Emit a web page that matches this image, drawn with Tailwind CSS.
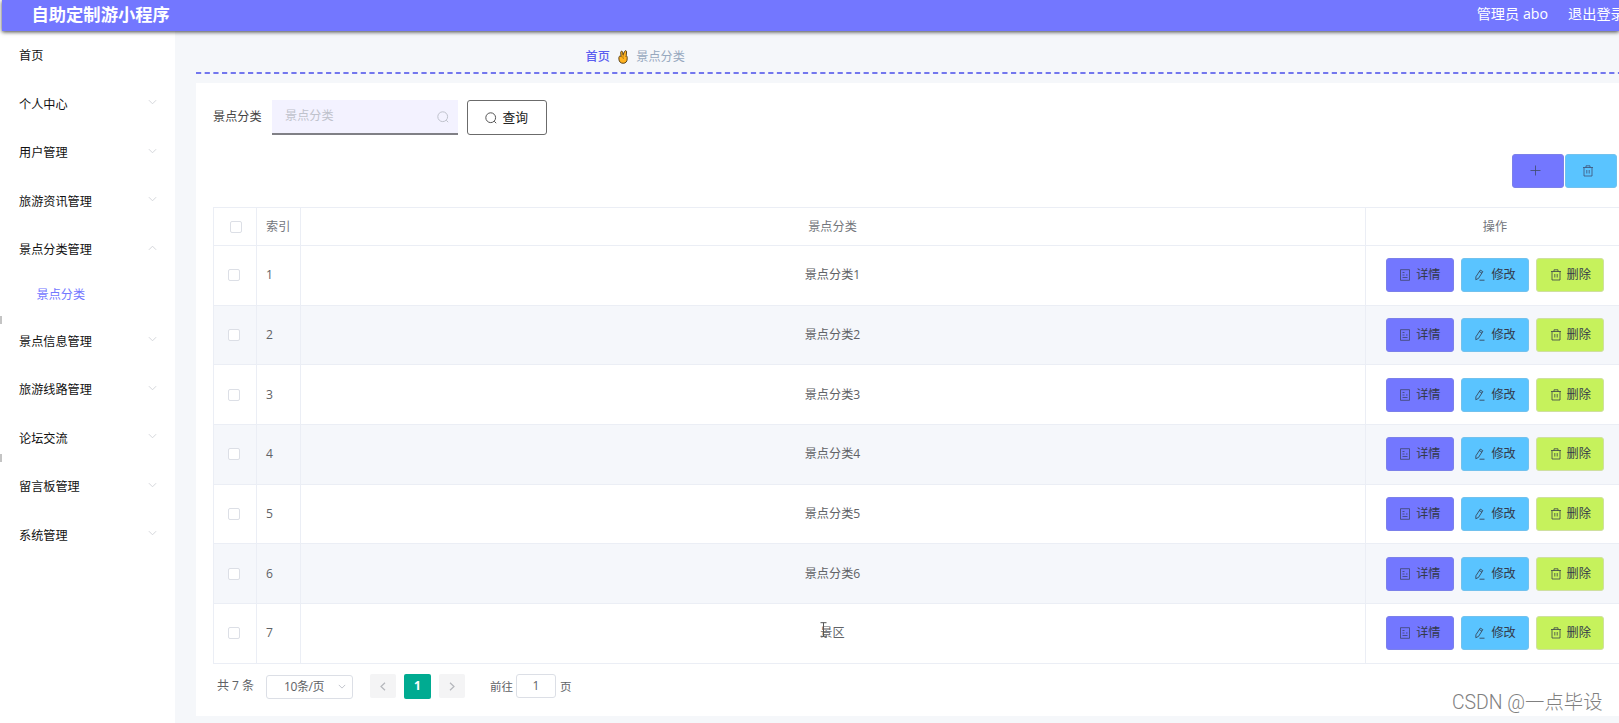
<!DOCTYPE html>
<html lang="zh">
<head>
<meta charset="utf-8">
<title>自助定制游小程序</title>
<script src="https://cdn.jsdelivr.net/npm/@tailwindcss/browser@4"></script>
</head>
<body class="w-[1619px] h-[723px] overflow-hidden relative bg-white pl-[2px] text-[12.150px] text-[#606266] font-['Open_Sans','Noto_Sans_CJK_SC',sans-serif]">
<svg class="hidden">
  <symbol id="down" viewBox="0 0 10 6"><path d="M1 1l4 4 4-4" fill="none" stroke="currentColor"/></symbol>
  <symbol id="up" viewBox="0 0 10 6"><path d="M1 5l4-4 4 4" fill="none" stroke="currentColor"/></symbol>
  <symbol id="search" viewBox="0 0 12 12"><circle cx="5.7" cy="5.7" r="4.9" fill="none" stroke="currentColor"/><path d="M9.2 9.2l2 2" stroke="currentColor"/></symbol>
  <symbol id="trash" viewBox="0 0 12 12"><path d="M1 2.500h10M4 2.500V.8h4v1.700M2 2.500v8.500h8v-8.500M4.800 5v3.500M7.200 5v3.500" fill="none" stroke="currentColor" stroke-width=".75"/></symbol>
  <symbol id="doc" viewBox="0 0 12 12"><path d="M1.500.7h9v10.600h-9zM3.500 3.500h2M3.500 6h2M3.500 8.500h5M7 6h1.500" fill="none" stroke="currentColor" stroke-width=".65"/></symbol>
  <symbol id="edit" viewBox="0 0 12 12"><path d="M6.300 1.100l2.500 1.500-4.300 6.800-2.700 1.300.1-2.900zM5.400 2.600l2.500 1.500M5.500 11.200h5" fill="none" stroke="currentColor" stroke-width=".8"/></symbol>
</svg>

<header class="relative z-10 h-[31px] bg-[#7377ff] text-white flex items-center shadow-[0_1px_4px_rgba(0,0,0,0.75)] whitespace-nowrap">
  <h1 class="ml-[29.500px] -mt-[2px] text-[17.300px] font-bold leading-none">自助定制游小程序</h1>
  <span class="ml-auto -mt-[3px] text-[14.200px] leading-none">管理员 abo</span>
  <span class="ml-[20px] -mt-[3px] w-[51px] text-[14.200px] leading-none">退出登录</span>
</header>

<div class="flex h-[692px]">
  <nav id="nav" class="w-[173px] shrink-0 bg-white text-[#111] leading-none pt-px"></nav>

  <main class="grow bg-[#f5f7fa] pl-[21px] overflow-hidden">
    <div class="h-[41px] flex items-center pl-[389.500px] pt-[11px] leading-none">
      <span class="text-[#5b5ef0] font-medium">首页</span>
      <svg class="w-[10px] h-[14px] ml-[8px]" viewBox="0 0 10 14"><path d="M.9 7.500C.8 6.200 2 5.900 3 6.400L2.700 2.300C2.700.9 4.400.8 4.600 2.100l.5 2.700L6.500 1.500C7 .3 8.600.5 8.600 1.800L8.200 5.600C9.200 6.200 9.300 7 9.200 8.800c0 2.800-1.500 4.500-4 4.500S1.100 11.800.9 9.200z" fill="#ffb321" stroke="#4a3412" stroke-width=".9"/><path d="M3 6.700c1.700-.3 2.700.8 2.300 2.300M5.100 4.800l.3 1.700M8.100 5.700L7.400 7" fill="none" stroke="#8a5a08" stroke-width=".6"/></svg>
      <span class="ml-[8.500px] text-[#97a8be]">景点分类</span>
    </div>
    <svg class="block w-[1423px] h-[2px]"><path d="M0 1h1423" stroke="#7377ee" stroke-width="2" stroke-dasharray="5.200 3.470"/></svg>

    <section class="mt-[9px] h-[633px] bg-white pl-[17px] pt-[17px]">
      <div class="flex items-center h-[35px] leading-none">
        <label class="w-[59px] text-[#444]">景点分类</label>
        <div class="w-[186px] h-[35px] bg-[#f3f2ff] border-b-2 border-[#808086] flex items-center justify-between pl-[13px] pr-[9px] text-[#bfc2cc]"><span>景点分类</span><svg class="w-[12px] h-[12px]"><use href="#search"/></svg></div>
        <button class="ml-[9px] w-[79.500px] h-[35px] border border-[#6b6b6b] rounded-[3px] flex items-center justify-center gap-[5px] text-[12.800px] text-[#222]"><svg class="w-[12px] h-[12px] text-[#555]"><use href="#search"/></svg>查询</button>
      </div>
      <div class="mt-[19px] flex justify-end gap-[1px] pr-[2.500px] text-[#3f4a6b]">
        <button class="w-[52px] h-[33.500px] rounded-[3px] bg-[#7377ff] border border-[#7b80ea] flex items-center justify-center"><svg class="w-[11px] h-[11px] -ml-[5px]" viewBox="0 0 11 11"><path d="M5.500.5v10M.5 5.500h10" stroke="currentColor" stroke-width=".8"/></svg></button>
        <button class="w-[52px] h-[33.500px] rounded-[3px] bg-[#5ac4ff] border border-[#72c2ee] flex items-center justify-center"><svg class="w-[12px] h-[12px] -ml-[5px]"><use href="#trash"/></svg></button>
      </div>
      <div class="mt-[19.500px] border-t border-l border-[#ebeef5]" id="table">
        <div class="flex h-[38px] border-b border-[#ebeef5] text-[#73767c]">
          <div class="w-[43px] shrink-0 border-r border-[#ebeef5] flex items-center pl-[16px]"><i class="block w-[12px] h-[12px] border border-[#dcdfe6] rounded-[2px] bg-white"></i></div>
          <div class="w-[43.500px] shrink-0 border-r border-[#ebeef5] flex items-center pl-[9px] pt-px">索引</div>
          <div class="w-[1065px] shrink-0 border-r border-[#ebeef5] flex items-center justify-center pt-px">景点分类</div>
          <div class="w-[259px] shrink-0 flex items-center justify-center pt-px">操作</div>
        </div>
      </div>
      <div class="mt-[10px] flex items-center h-[25px] text-[12px] leading-none whitespace-nowrap">
        <span class="ml-[4px] w-[49px]">共 7 条</span>
        <div class="w-[87px] h-[24px] border border-[#dcdfe6] rounded-[3px] flex items-center justify-between pl-[17px] pr-[6px] mt-[1px]"><span class="tracking-[-0.400px]">10条/页</span><svg class="w-[8px] h-[5px] text-[#b4b8c0]"><use href="#down"/></svg></div>
        <div class="ml-[17px] w-[26px] h-[24px] bg-[#f4f4f5] rounded-[2px] flex items-center justify-center text-[#b4b6bb]"><svg class="w-[6px] h-[9px]" viewBox="0 0 6 9"><path d="M5 .7L1 4.500l4 3.800" fill="none" stroke="currentColor" stroke-width="1.200"/></svg></div>
        <div class="ml-[8px] w-[27px] h-[25px] bg-[#00ab91] rounded-[2px] flex items-center justify-center text-white font-bold">1</div>
        <div class="ml-[8px] w-[26px] h-[24px] bg-[#f4f4f5] rounded-[2px] flex items-center justify-center text-[#b4b6bb]"><svg class="w-[6px] h-[9px]" viewBox="0 0 6 9"><path d="M1 .7l4 3.800-4 3.800" fill="none" stroke="currentColor" stroke-width="1.200"/></svg></div>
        <span class="ml-[25px] w-[26px] text-[11.500px]">前往</span>
        <div class="w-[40px] h-[24px] border border-[#dcdfe6] rounded-[3px] flex items-center justify-center">1</div>
        <span class="ml-[4px] text-[11.500px]">页</span>
      </div>
    </section>
  </main>
</div>

<i class="absolute left-0 top-[316px] w-[2px] h-[8px] bg-[#c4c4c4]"></i>
<i class="absolute left-0 top-[454px] w-[2px] h-[8px] bg-[#c4c4c4]"></i>
<svg class="absolute left-[820px] top-[622px] w-[7px] h-[15px]" viewBox="0 0 7 15"><path d="M.5.7h6M3.500.7v13.600M.5 14.300h6" stroke="#555" fill="none"/></svg>
<div class="absolute left-[1452px] top-[692px] text-[19.400px] leading-[22px] font-['Roboto','Noto_Sans_CJK_SC',sans-serif] font-light text-[#808080] whitespace-nowrap">CSDN @一点毕设</div>

<script>
  const items = [['首页', ''], ['个人中心', 'down'], ['用户管理', 'down'], ['旅游资讯管理', 'down'], ['景点分类管理', 'up'], null, ['景点信息管理', 'down'], ['旅游线路管理', 'down'], ['论坛交流', 'down'], ['留言板管理', 'down'], ['系统管理', 'down']];
  document.getElementById('nav').innerHTML = items.map(it => it
    ? `<div class="h-[48.500px] flex items-center justify-between pl-[17px] pr-[18px]"><span>${it[0]}</span>${it[1] ? `<svg class="w-[9px] h-[6px] mb-[5px] text-[#cfd1d6]"><use href="#${it[1]}"/></svg>` : ''}</div>`
    : '<div class="h-[43px] flex items-center pl-[34.500px] pb-px text-[#7377ff]">景点分类</div>').join('');
  const names = ['景点分类1', '景点分类2', '景点分类3', '景点分类4', '景点分类5', '景点分类6', '景区'];
  document.getElementById('table').insertAdjacentHTML('beforeend', names.map((n, i) => `
    <div class="flex h-[59.700px] border-b border-[#ebeef5] odd:bg-[#f5f7fb]">
      <div class="w-[43px] shrink-0 border-r border-[#ebeef5] flex items-center pl-[14px]"><i class="block w-[12px] h-[12px] border border-[#dcdfe6] rounded-[2px] bg-white"></i></div>
      <div class="w-[43.500px] shrink-0 border-r border-[#ebeef5] flex items-center pl-[9px]">${i + 1}</div>
      <div class="w-[1065px] shrink-0 border-r border-[#ebeef5] flex items-center justify-center">${n}</div>
      <div class="flex items-center gap-[7.500px] pl-[20.500px] text-[#333a4a]">
        <button class="w-[67.700px] h-[34px] rounded-[3px] border border-[#7b80ea] bg-[#7377ff] flex items-center justify-center gap-[5px]"><svg class="w-[12px] h-[12px]"><use href="#doc"/></svg>详情</button>
        <button class="w-[67.700px] h-[34px] rounded-[3px] border border-[#72c2ee] bg-[#5ac4ff] flex items-center justify-center gap-[5px]"><svg class="w-[12px] h-[12px]"><use href="#edit"/></svg>修改</button>
        <button class="w-[67.700px] h-[34px] rounded-[3px] border border-[#cfe0a0] bg-[#c6f25c] flex items-center justify-center gap-[5px]"><svg class="w-[12px] h-[12px]"><use href="#trash"/></svg>删除</button>
      </div>
    </div>`).join(''));
</script>
</body>
</html>
